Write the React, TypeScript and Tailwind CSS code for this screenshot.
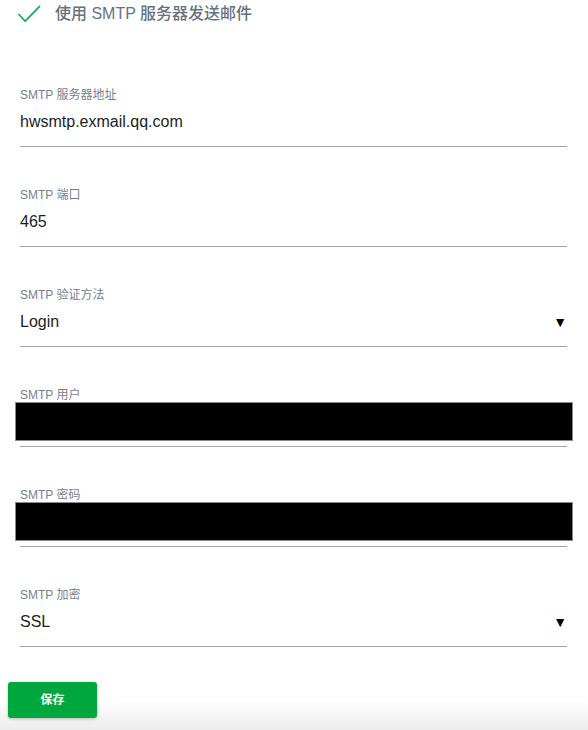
import React from "react";

const FONT = {
  fontFamily: '"Liberation Sans", "Noto Sans CJK SC", sans-serif',
};

type Field = {
  label: string;
  value?: string;
  select?: boolean;
  redacted?: boolean;
};

const FIELDS: Field[] = [
  { label: "SMTP 服务器地址", value: "hwsmtp.exmail.qq.com" },
  { label: "SMTP 端口", value: "465" },
  { label: "SMTP 验证方法", value: "Login", select: true },
  { label: "SMTP 用户", redacted: true },
  { label: "SMTP 密码", redacted: true },
  { label: "SMTP 加密", value: "SSL", select: true },
];

function FieldRow({ f }: { f: Field }) {
  return (
    <div className="mt-10 first:mt-0">
      <div className="h-4 text-[12px] leading-4 text-[#76818e] mb-[7px]">
        {f.label}
      </div>
      <div className="relative flex items-center justify-between h-6 pb-3 box-content border-b border-[#a3a3a3] mr-[1px]">
        <span className="text-[16px] leading-6 text-[#1d1d1d]">{f.value}</span>
        {f.select && <span className="text-[14px] text-black">▼</span>}
        {f.redacted && (
          <div className="absolute -top-2 -left-[5px] -right-[6px] h-[39px] bg-black border border-[#8a8a8a]" />
        )}
      </div>
    </div>
  );
}

export default function App() {
  return (
    <div
      style={FONT}
      className="w-[588px] h-[730px] overflow-hidden bg-[linear-gradient(to_bottom,#ffffff_700px,#ececec_730px)]"
    >
      <div className="px-5">
        <div className="flex items-center h-7">
          <svg viewBox="0 0 24 18" className="w-[23px] h-[18px] -ml-[2px]" fill="none" stroke="#1aab55" strokeWidth="1.8">
            <path d="M1 9.5l6.5 7L22.5 1" strokeLinecap="round" strokeLinejoin="round" />
          </svg>
          <span className="ml-[14px] text-[16px] font-medium text-[#66727f]">
            使用 SMTP 服务器发送邮件
          </span>
        </div>

        <div className="mt-[59px]">
          {FIELDS.map((f) => (
            <FieldRow key={f.label} f={f} />
          ))}
        </div>

        <button className="mt-[35px] -ml-3 w-[89px] h-9 rounded-[3px] bg-[#00a73c] text-white text-[12px] font-bold shadow-[0_1px_3px_rgba(0,0,0,0.25)]">
          保存
        </button>
      </div>
    </div>
  );
}
